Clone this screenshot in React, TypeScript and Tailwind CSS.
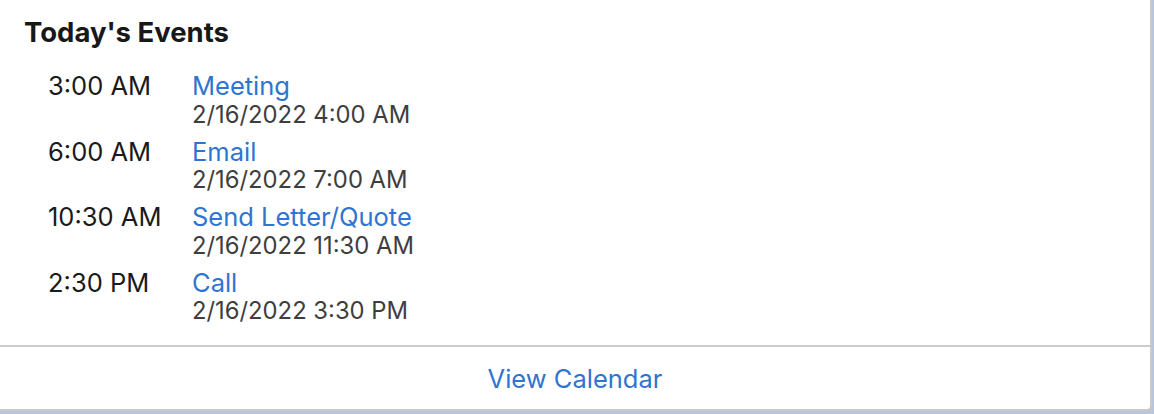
import React from "react";

const events = [
  { time: "3:00 AM", title: "Meeting", end: "2/16/2022 4:00 AM" },
  { time: "6:00 AM", title: "Email", end: "2/16/2022 7:00 AM" },
  { time: "10:30 AM", title: "Send Letter/Quote", end: "2/16/2022 11:30 AM" },
  { time: "2:30 PM", title: "Call", end: "2/16/2022 3:30 PM" },
];

export default function App() {
  return (
    <div
      className="w-[1154px] h-[414px] bg-[#b8c5da] overflow-hidden"
      style={{ fontFamily: "Inter, 'Liberation Sans', sans-serif" }}
    >
      <div className="w-[1152px] h-[411px] bg-white border-r-2 border-b-2 border-[#c9c9c9] rounded-br-[5px] flex flex-col">
        <div className="flex-1 pl-[24px] pt-[16px]">
          <h2 className="text-[27.5px] leading-[32px] font-bold text-[#181818]">
            Today's Events
          </h2>
          <div className="mt-[24px] pl-[24px] flex flex-col gap-[8.67px]">
            {events.map((e) => (
              <div key={e.time} className="flex">
                <div className="w-[144px] text-[25.5px] leading-[28.5px] text-[#1a1a1a]">
                  {e.time}
                </div>
                <div className="flex flex-col">
                  <a className="text-[25.5px] leading-[28.5px] text-[#2f74d0] cursor-pointer">
                    {e.title}
                  </a>
                  <span className="text-[23.8px] leading-[28.5px] text-[#3e3e3e]">
                    {e.end}
                  </span>
                </div>
              </div>
            ))}
          </div>
        </div>
        <div className="h-[2px] bg-[#cccccc]" />
        <div className="h-[62px] flex items-center justify-center pt-[2px]">
          <a className="text-[25.5px] leading-[30px] text-[#2f74d0] cursor-pointer">
            View Calendar
          </a>
        </div>
      </div>
    </div>
  );
}
